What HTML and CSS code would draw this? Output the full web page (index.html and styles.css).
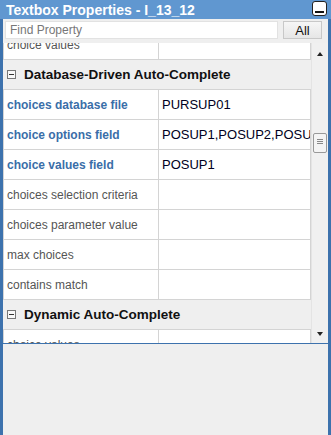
FILE: index.html
```html
<!DOCTYPE html>
<html lang="en">
<head>
    <meta charset="UTF-8">
    <title>Textbox Properties</title>
    <link rel="stylesheet" href="styles.css">
</head>
<body>
    <div class="panel">
        <div class="titlebar">
            <span class="title">Textbox Properties - I_13_12</span>
            <span class="minimize"></span>
        </div>

        <div class="search">
            <input type="text" class="search-input" placeholder="Find Property">
            <button class="btn-all">All</button>
        </div>

        <div class="grid-wrap">
            <div class="grid-view">
                <div class="grid">
                    <div class="row"><div class="label">choice values</div><div class="value"></div></div>

                    <div class="group"><span class="toggle"></span>Database-Driven Auto-Complete</div>
                    <div class="row"><div class="label set">choices database file</div><div class="value">PURSUP01</div></div>
                    <div class="row"><div class="label set">choice options field</div><div class="value">POSUP1,POSUP2,POSUP3</div></div>
                    <div class="row"><div class="label set">choice values field</div><div class="value">POSUP1</div></div>
                    <div class="row"><div class="label">choices selection criteria</div><div class="value"></div></div>
                    <div class="row"><div class="label">choices parameter value</div><div class="value"></div></div>
                    <div class="row"><div class="label">max choices</div><div class="value"></div></div>
                    <div class="row"><div class="label">contains match</div><div class="value"></div></div>

                    <div class="group"><span class="toggle"></span>Dynamic Auto-Complete</div>
                    <div class="row"><div class="label">choice values</div><div class="value"></div></div>
                </div>
            </div>

            <!-- barra di scorrimento -->
            <div class="scrollbar">
                <span class="arrow up"></span>
                <span class="thumb"></span>
                <span class="arrow down"></span>
            </div>
        </div>

        <div class="footer"></div>
    </div>
</body>
</html>
```

FILE: styles.css
```css
/* Stili di base */
body {
    margin: 0;
    background-color: #efefef;
    font-family: 'Liberation Sans', Arial, sans-serif;
    font-size: 12px;
}

.panel {
    height: 435px;
    border-left: 3px solid #3d72ad;
    border-right: 3px solid #3d72ad;
    box-sizing: border-box;
    display: flex;
    flex-direction: column;
}

.titlebar {
    height: 19px;
    margin: 0 -3px;
    padding: 0 4px 0 6px;
    background-color: #6097d0;
    display: flex;
    align-items: center;
    justify-content: space-between;
}

.title {
    color: #fff;
    font-weight: bold;
    font-size: 14px;
}

.minimize {
    width: 13px;
    height: 13px;
    margin-top: -3px;
    background-color: #fff;
    border: 1px solid #222;
    border-radius: 3px;
    position: relative;
}

.minimize::after {
    content: '';
    position: absolute;
    left: 2px;
    right: 2px;
    bottom: 2px;
    height: 2px;
    background-color: #111;
}

.search {
    height: 22px;
    padding: 2px 6px 0 2px;
    display: flex;
    gap: 5px;
}

.search-input {
    flex: 1;
    height: 18px;
    box-sizing: border-box;
    margin: 0;
    padding: 0 4px;
    border: 1px solid #e2e2e2;
    font-family: inherit;
    font-size: 12px;
    color: #333;
}

.search-input::placeholder {
    color: #777;
}

.btn-all {
    width: 39px;
    height: 18px;
    padding: 0;
    border: 1px solid #c8c8c8;
    background: linear-gradient(#f6f6f6, #e6e6e6);
    font-family: inherit;
    font-size: 13px;
    color: #111;
}

.grid-wrap {
    height: 300px;
    display: flex;
    border-bottom: 1px solid #3d72ad;
}

.grid-view {
    flex: 1;
    overflow: hidden;
}

.grid {
    margin-top: -13px;
}

.row {
    height: 30px;
    display: flex;
    background-color: #fff;
    border-left: 1px solid #d4d4d4;
    border-bottom: 1px solid #d4d4d4;
    box-sizing: border-box;
}

.label,
.value {
    display: flex;
    align-items: center;
    padding-left: 3px;
    overflow: hidden;
    white-space: nowrap;
}

.label {
    width: 151px;
    flex-shrink: 0;
    color: #555;
    border-right: 1px solid #d4d4d4;
}

.label.set {
    color: #3a6ea8;
    font-weight: bold;
}

.value {
    flex: 1;
    font-size: 13px;
    color: #000022;
    border-right: 1px solid #d4d4d4;
}

.group {
    height: 30px;
    display: flex;
    align-items: center;
    padding-left: 4px;
    background-color: #efefef;
    border-bottom: 1px solid #d4d4d4;
    box-sizing: border-box;
    font-weight: bold;
    font-size: 13.5px;
    color: #111;
}

.toggle {
    width: 7px;
    height: 7px;
    margin-right: 8px;
    border: 1px solid #777;
    background-color: #f8f8f8;
    position: relative;
}

.toggle::after {
    content: '';
    position: absolute;
    left: 1px;
    right: 1px;
    top: 3px;
    height: 1px;
    background-color: #333;
}

.scrollbar {
    width: 16px;
    background-color: #f0f0f0;
    border-left: 1px solid #e4e4e4;
    position: relative;
}

.arrow {
    position: absolute;
    left: 5px;
    width: 0;
    height: 0;
    border-left: 3px solid transparent;
    border-right: 3px solid transparent;
}

.arrow.up {
    top: 9px;
    border-bottom: 4px solid #222;
}

.arrow.down {
    bottom: 7px;
    border-top: 4px solid #222;
}

.thumb {
    position: absolute;
    top: 90px;
    left: 1px;
    width: 12px;
    height: 18px;
    border: 1px solid #999;
    border-radius: 2px;
    background: repeating-linear-gradient(#f4f4f4 0, #f4f4f4 5px, #888 5px, #888 6px, #f4f4f4 6px, #f4f4f4 7px, #888 7px, #888 8px, #f4f4f4 8px, #f4f4f4 9px, #888 9px, #888 10px, #f4f4f4 10px, #f4f4f4 18px);
    background-size: 6px 18px;
    background-repeat: no-repeat;
    background-position: center;
    background-color: #f4f4f4;
}

.footer {
    flex: 1;
    background-color: #efefef;
}
```
